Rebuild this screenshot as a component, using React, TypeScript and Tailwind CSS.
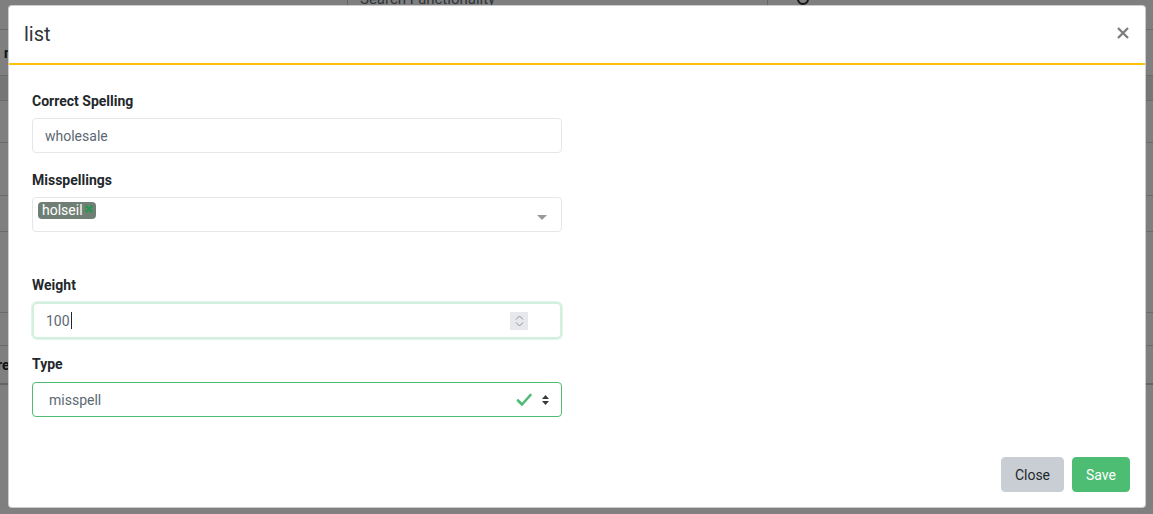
import React from "react";

const font = { fontFamily: "Roboto, 'Liberation Sans', Arial, sans-serif" };

const BackgroundPage = () => (
  <div className="w-full h-full bg-white text-[#23282c] text-sm">
    <div className="h-[30px] border-b border-[#d6d6d6] flex">
      <div className="ml-[347px] w-[421px] h-[30px] border-x border-[#c8ced3] overflow-hidden">
        <div className="px-3 -mt-[11px] text-[15px] text-[#5c6873]">Search Functionality</div>
      </div>
      <div className="ml-[28px] -mt-[8px]">
        <svg width="16" height="16" viewBox="0 0 16 16" fill="none" stroke="#23282c" strokeWidth="2">
          <circle cx="7" cy="7" r="5" />
        </svg>
      </div>
    </div>
    <div className="h-[46px] border-b border-[#d6d6d6] flex items-center pl-[4px] font-bold">name</div>
    <div className="h-[25px] border-b border-[#d6d6d6] bg-[#ececec]" />
    <div className="h-[42px] border-b border-[#d6d6d6]" />
    <div className="h-[53px] border-b border-[#d6d6d6]" />
    <div className="h-[36px] border-b border-[#d6d6d6]" />
    <div className="h-[81px] border-b border-[#d6d6d6]" />
    <div className="h-[33px] border-b border-[#d6d6d6]" />
    <div className="h-[39px] border-b-2 border-[#c8c8c8] flex items-center -ml-[3px] font-bold">
      re
    </div>
  </div>
);

const Label = ({ children }: { children: React.ReactNode }) => (
  <label className="block text-sm leading-[21px] font-bold text-[#23282c] mb-[6px]">{children}</label>
);

const App = () => {
  return (
    <div className="relative w-full h-[514px] overflow-hidden" style={font}>
      <BackgroundPage />
      <div className="absolute inset-0 bg-black/50" />

      <div className="absolute left-[8px] top-[5px] w-[1138px] h-[503px] bg-white rounded-[4px] border border-black/20 flex flex-col">
        {/* header */}
        <div className="h-[59px] shrink-0 border-b-2 border-[#ffc107] flex items-center justify-between pl-[15px] pr-[15px]">
          <h5 className="text-[20px] leading-6 text-[#2f353a] -mt-[1px]">list</h5>
          <button className="-mt-[4px] mr-[1px]">
            <svg width="12" height="12" viewBox="0 0 12 12" fill="none" stroke="#7f7f7f" strokeWidth="2.4">
              <path d="M1 1 L11 11 M11 1 L1 11" />
            </svg>
          </button>
        </div>

        {/* body */}
        <div className="pt-[26px] px-[23px]">
          <div className="w-[530px]">
            <Label>Correct Spelling</Label>
            <div className="h-[35px] border border-[#e4e7ea] rounded-[4px] px-3 flex items-center text-sm text-[#5c6873]">
              wholesale
            </div>

            <div className="mt-[17px]">
              <Label>Misspellings</Label>
              <div className="h-[35px] border border-[#e4e7ea] rounded-[4px] relative">
                <div className="flex items-start pt-[4px] pl-[5px]">
                  <span className="h-[17px] flex items-center gap-[2px] rounded-[4px] bg-[#6f7f75] text-white text-sm leading-[17px] pl-[4px] pr-[3px]">
                    holseil
                    <svg className="-mt-[3px]" width="8" height="8" viewBox="0 0 8 8" fill="none" stroke="#1f9a4c" strokeWidth="2" strokeLinecap="square">
                      <path d="M1.5 1.5 L6.5 6.5 M6.5 1.5 L1.5 6.5" />
                    </svg>
                  </span>
                </div>
                <span className="absolute right-[14px] top-[17px] w-0 h-0 border-x-[5px] border-x-transparent border-t-[5px] border-t-[#999]" />
              </div>
            </div>

            <div className="mt-[43px]">
              <Label>Weight</Label>
              <div className="h-[37px] border-2 border-[#d3efde] shadow-[0_0_0_1px_#e3f5ea] rounded-[5px] pl-3 pr-[32px] flex items-center justify-between text-sm text-[#5c6873]">
                <span className="flex items-center">
                  100
                  <span className="inline-block w-px h-[17px] bg-[#23282c] ml-[1px]" />
                </span>
                <span className="w-[18px] h-[18px] bg-[#e7e8ec] flex flex-col items-center justify-center gap-[2px]">
                  <svg width="9" height="5" viewBox="0 0 9 5" fill="none" stroke="#8a8f99" strokeWidth="1">
                    <path d="M1 4.5 L4.5 1 L8 4.5" />
                  </svg>
                  <svg width="9" height="5" viewBox="0 0 9 5" fill="none" stroke="#8a8f99" strokeWidth="1">
                    <path d="M1 0.5 L4.5 4 L8 0.5" />
                  </svg>
                </span>
              </div>
            </div>

            <div className="mt-[15px]">
              <Label>Type</Label>
              <div className="h-[35px] mt-[7px] border border-[#4dbd74] rounded-[4px] pl-4 pr-[11px] flex items-center text-sm text-[#5c6873]">
                <span className="flex-1">misspell</span>
                <svg width="16" height="14" viewBox="0 0 16 14" fill="none" stroke="#4dbd74" strokeWidth="2.6" strokeLinecap="round" strokeLinejoin="round">
                  <path d="M2 7.5 L6 11.5 L14.5 2" />
                </svg>
                <svg className="ml-[9px]" width="9" height="12" viewBox="0 0 9 12" fill="#343a40">
                  <path d="M4.5 1 L8 5 L1 5 Z" />
                  <path d="M4.5 11 L8 7 L1 7 Z" />
                </svg>
              </div>
            </div>
          </div>
        </div>

        {/* footer */}
        <div className="mt-auto flex justify-end gap-2 pr-[15px] pb-[15px]">
          <button className="h-[35px] px-[13px] rounded-[4px] bg-[#c8ced3] text-sm text-[#23282c] border border-[#c8ced3]">
            Close
          </button>
          <button className="h-[35px] px-[13px] rounded-[4px] bg-[#4dbd74] text-sm text-white border border-[#4dbd74]">
            Save
          </button>
        </div>
      </div>
    </div>
  );
};

export default App;
